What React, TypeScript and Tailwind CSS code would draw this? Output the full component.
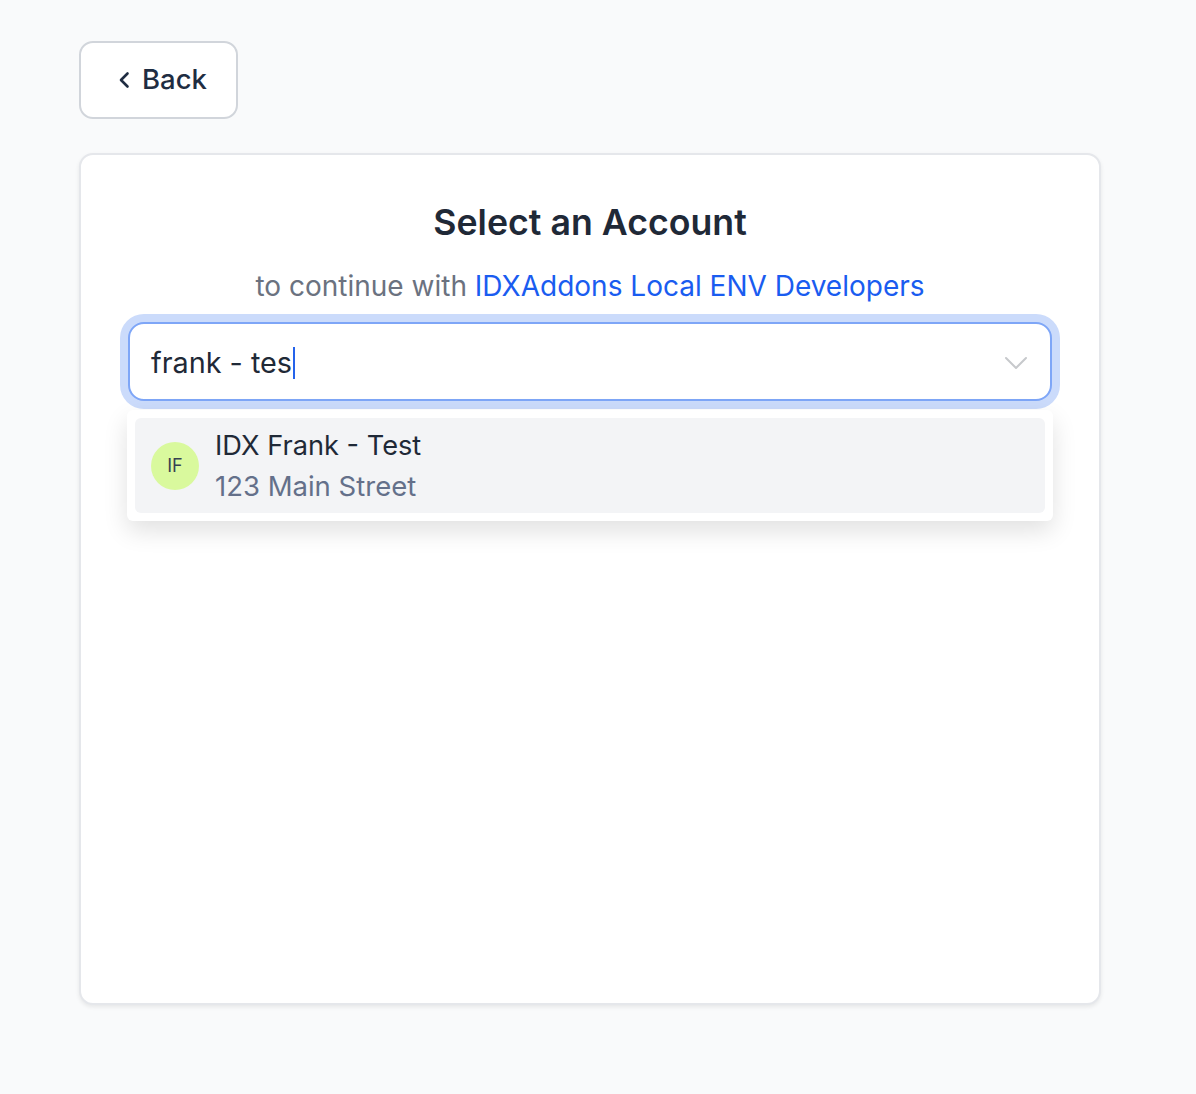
import React from "react";

export default function App() {
  return (
    <div className="min-h-[1094px] w-full bg-[#f9fafb] px-[79px] pt-[41px]" style={{ fontFamily: "Inter, 'Noto Sans', sans-serif" }}>
      <button className="flex h-[78px] w-[159px] items-center justify-center gap-[12px] rounded-[14px] border-2 border-[#d1d5db] bg-white pl-[8px] text-[27.5px] font-medium text-[#1f2d42]">
        <svg width="12" height="22" viewBox="0 0 12 22" fill="none">
          <path d="M9.5 4.5 L3 11 L9.5 17.5" stroke="#1f2d42" strokeWidth="2.6" strokeLinecap="round" strokeLinejoin="round" />
        </svg>
        <span>Back</span>
      </button>

      <div className="mt-[34px] h-[852px] w-[1022px] rounded-[14px] border-2 border-[#e5e7eb] bg-white shadow-[0_2px_4px_rgba(0,0,0,0.08)] px-[47px] pt-[43px]">
        <h1 className="text-center text-[35.7px] font-semibold leading-[48px] text-[#1f2937]">Select an Account</h1>
        <p className="mt-[23px] text-center text-[28px] leading-[34px] text-[#6b7280]">
          to continue with <span className="text-[#1a5cf0]">IDXAddons Local ENV Developers</span>
        </p>

        <div className="relative mt-[19px]">
          <div className="flex h-[79px] items-center justify-between rounded-[16px] border-2 border-[#7ea6f7] bg-white pl-[21px] pr-[22px] pt-[2px] shadow-[0_0_0_8px_#cbdbfb]">
            <div className="flex items-center text-[28.8px] text-[#1f2937]">
              <span>frank - tes</span>
              <span className="ml-[1px] inline-block h-[32px] w-[2px] bg-[#2563eb]" />
            </div>
            <svg width="24" height="14" viewBox="0 0 24 14" fill="none">
              <path d="M2 2 L12 12 L22 2" stroke="#c7c9cc" strokeWidth="2" strokeLinecap="round" strokeLinejoin="round" />
            </svg>
          </div>

          <div className="absolute left-[-1px] right-[-1px] top-[88px] rounded-[6px] bg-white p-[8px] shadow-[0_10px_25px_rgba(0,0,0,0.12)]">
            <div className="flex h-[95px] items-center gap-[16px] rounded-[6px] bg-[#f3f4f6] px-[16px]">
              <div className="flex h-[48px] w-[48px] items-center justify-center rounded-full bg-[#d9f99d] text-[18px] text-[#374151]">IF</div>
              <div className="flex flex-col">
                <span className="text-[27.2px] leading-[40px] text-[#1f2937]">IDX Frank - Test</span>
                <span className="text-[27.5px] leading-[40px] text-[#64708a]">123 Main Street</span>
              </div>
            </div>
          </div>
        </div>
      </div>
    </div>
  );
}
